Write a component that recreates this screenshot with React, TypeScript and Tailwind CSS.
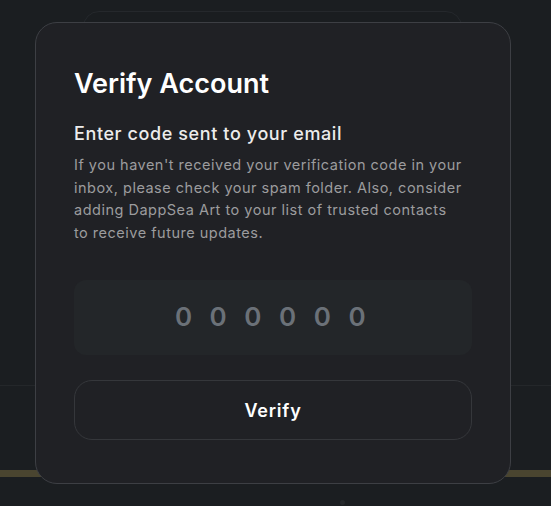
import React, { useState } from 'react';

const font = { fontFamily: 'Inter, "Noto Sans", sans-serif' };

export default function App() {
  const [code, setCode] = useState('');

  return (
    <main className="relative h-[506px] w-full overflow-hidden bg-[#1b1e21]" style={font}>
      {/* page behind the modal */}
      <div className="h-[386px] border-b border-[#24272a] pt-[11px]">
        <div className="ml-[83px] h-[200px] w-[379px] rounded-2xl border border-[#25282c] bg-[#1a1d20]" />
      </div>
      <div className="mt-[84px] h-[7px] w-full bg-[#4a4530]" />
      <div className="ml-[340px] mt-[23px] h-[5px] w-[5px] rounded-full bg-[#25282b]" />

      {/* modal */}
      <div className="absolute inset-0">
        <div className="ml-[35px] mt-[22px] w-[476px] rounded-[22px] border border-[#3d3f44] bg-[#202125] px-[38px] pb-[43px] pt-[44px]">
          <h1 className="text-[27px] font-semibold leading-[34px] text-white">Verify Account</h1>
          <h2 className="mt-[21px] text-[18px] font-medium leading-[24px] tracking-[0.6px] text-[#ececec]">Enter code sent to your email</h2>
          <p className="mt-[8px] pr-[9px] text-[14.5px] leading-[22.5px] tracking-[0.5px] text-[#9c9c9e]">
            If you haven't received your verification code in your inbox, please check your spam folder. Also, consider adding DappSea Art to your list of trusted contacts to receive future updates.
          </p>
          <div className="mt-[36px] flex h-[75px] items-center justify-center rounded-[12px] bg-[#232629]">
            <input
              value={code}
              onChange={(e) => setCode(e.target.value)}
              placeholder="0 0 0 0 0 0"
              maxLength={6}
              className="w-full bg-transparent pb-[3px] text-center text-[26px] font-semibold tracking-[5.5px] text-white outline-none placeholder:text-[#6b7178]"
            />
          </div>
          <button className="mt-[25px] flex h-[60px] w-full items-center justify-center rounded-[18px] border border-[#35373b] text-[18px] font-semibold tracking-[0.8px] text-white">
            Verify
          </button>
        </div>
      </div>
    </main>
  );
}
